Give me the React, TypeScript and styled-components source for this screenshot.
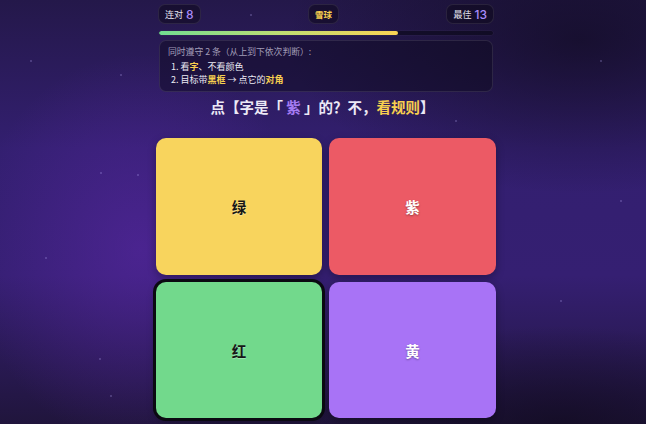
import React from "react";
import styled, { createGlobalStyle } from "styled-components";

const Global = createGlobalStyle`
  html, body { margin: 0; padding: 0; }
  body {
    width: 646px;
    height: 424px;
    overflow: hidden;
    font-family: "Noto Sans CJK SC", "Noto Sans", sans-serif;
    background:
      radial-gradient(ellipse 240px 280px at 140px 250px, rgba(92, 40, 168, 0.55), rgba(92, 40, 168, 0) 70%),
      radial-gradient(ellipse 420px 220px at 580px 40px, rgba(18, 12, 36, 0.75), rgba(18, 12, 36, 0) 70%),
      radial-gradient(ellipse 360px 140px at 560px 424px, rgba(16, 10, 30, 0.7), rgba(16, 10, 30, 0) 70%),
      linear-gradient(180deg, #24184a 0%, #331f70 35%, #351f72 65%, #20153c 100%);
  }
`;

const Page = styled.div`
  position: relative;
  width: 646px;
  height: 424px;
  overflow: hidden;
`;

const Star = styled.span`
  position: absolute;
  width: 1.5px;
  height: 1.5px;
  border-radius: 50%;
  background: rgba(190, 180, 255, 0.28);
`;

const Column = styled.div`
  width: 340px;
  margin-left: 156px;
  padding-top: 4px;
  display: flex;
  flex-direction: column;
`;

const TopBar = styled.div`
  display: flex;
  align-items: center;
  justify-content: space-between;
  padding: 0 2px;
`;

const Pill = styled.div`
  height: 20px;
  box-sizing: border-box;
  padding: 0 6px;
  display: flex;
  align-items: center;
  gap: 3px;
  border-radius: 7px;
  background: rgba(14, 10, 30, 0.55);
  border: 1px solid rgba(255, 255, 255, 0.09);
`;

const PillLabel = styled.span`
  font-size: 9px;
  color: #e6e3f0;
`;

const PillNum = styled.span`
  font-family: "Inter", "Noto Sans", sans-serif;
  font-size: 12px;
  font-weight: 500;
  color: #a98bfa;
`;

const ModeTag = styled.span`
  font-size: 8.5px;
  font-weight: 700;
  color: #f7cf4f;
`;

const Track = styled.div`
  margin: 7px 3px 0 3px;
  height: 3.5px;
  border-radius: 2px;
  background: rgba(10, 8, 24, 0.6);
  box-shadow: 0 0 0 0.5px rgba(255, 255, 255, 0.06);
  overflow: hidden;
`;

const Fill = styled.div`
  height: 100%;
  border-radius: 2px;
  background: linear-gradient(90deg, #72dc92 0%, #bddc74 50%, #fbd354 100%);
`;

const RuleBox = styled.div`
  margin: 5.5px 3px 0 3px;
  box-sizing: border-box;
  height: 52px;
  padding: 4px 8px 0 8px;
  border-radius: 7px;
  background: rgba(14, 10, 32, 0.5);
  border: 1px solid rgba(255, 255, 255, 0.1);
  display: flex;
  flex-direction: column;
`;

const RuleHead = styled.div`
  font-size: 8.8px;
  line-height: 13px;
  color: #a29db8;
  margin-bottom: 2px;
`;

const RuleLine = styled.div`
  font-size: 9px;
  line-height: 13px;
  color: #ecebf4;
  padding-left: 3px;
`;

const Hl = styled.span`
  color: #f7cf4f;
  font-weight: 700;
`;

const Prompt = styled.div`
  margin-top: 5px;
  text-align: center;
  font-size: 14.5px;
  font-weight: 700;
  color: #ece9f6;
  line-height: 20px;
  padding-right: 7px;
`;

const PromptPurple = styled.span`
  color: #a57cf3;
`;

const PromptYellow = styled.span`
  color: #f7cf4f;
`;

const Grid = styled.div`
  margin-top: 21px;
  display: grid;
  grid-template-columns: 166px 167px;
  grid-template-rows: 137px 136px;
  column-gap: 7px;
  row-gap: 7px;
`;

const Card = styled.div<{ $bg: string; $framed?: boolean; $dark?: boolean }>`
  box-sizing: border-box;
  border-radius: 10px;
  background: ${(p) => p.$bg};
  display: flex;
  align-items: center;
  justify-content: center;
  font-size: 14.5px;
  font-weight: 700;
  color: ${(p) => (p.$dark ? "#161616" : "#ffffff")};
  text-shadow: ${(p) =>
    p.$dark ? "0 1px 1px rgba(255,255,255,0.35)" : "0 1px 2px rgba(0,0,0,0.35)"};
  box-shadow: ${(p) =>
    p.$framed
      ? "0 0 0 3px #0b0a12, 0 3px 8px rgba(0,0,0,0.35)"
      : "0 3px 8px rgba(0,0,0,0.3)"};
`;

const stars = [
  [120, 74], [100, 172], [137, 174], [45, 257], [99, 358], [110, 395],
  [250, 14], [455, 120], [600, 60], [560, 300], [620, 200], [30, 60],
];

export default function App() {
  return (
    <>
      <Global />
      <Page>
        {stars.map(([x, y], i) => (
          <Star key={i} style={{ left: x, top: y }} />
        ))}
        <Column>
          <TopBar>
            <Pill>
              <PillLabel>连对</PillLabel>
              <PillNum>8</PillNum>
            </Pill>
            <Pill>
              <ModeTag>雪球</ModeTag>
            </Pill>
            <Pill>
              <PillLabel>最佳</PillLabel>
              <PillNum>13</PillNum>
            </Pill>
          </TopBar>
          <Track>
            <Fill style={{ width: "71.5%" }} />
          </Track>
          <RuleBox>
            <RuleHead>同时遵守 2 条（从上到下依次判断）:</RuleHead>
            <RuleLine>
              1. 看<Hl>字</Hl>、不看颜色
            </RuleLine>
            <RuleLine>
              2. 目标带<Hl>黑框</Hl> → 点它的<Hl>对角</Hl>
            </RuleLine>
          </RuleBox>
          <Prompt>
            点【字是「 <PromptPurple>紫</PromptPurple> 」的？不，<PromptYellow>看规则</PromptYellow>】
          </Prompt>
          <Grid>
            <Card $bg="#f8d45d" $dark>绿</Card>
            <Card $bg="#ec5a65">紫</Card>
            <Card $bg="#72d98c" $dark $framed>红</Card>
            <Card $bg="#a873f6">黄</Card>
          </Grid>
        </Column>
      </Page>
    </>
  );
}
